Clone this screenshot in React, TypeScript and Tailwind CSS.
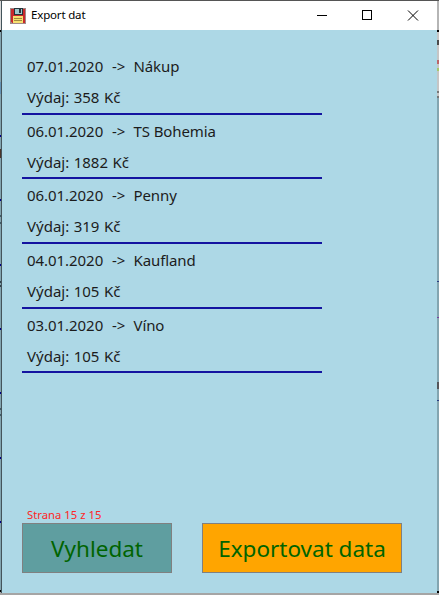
type Segment = [height: number, color: string];

const leftEdge: Segment[] = [
  [29, 'bg-[#d8d8d8]'], [2, 'bg-black'], [50, 'bg-[#83a5b0]'], [12, 'bg-[#6493b5]'],
  [41, 'bg-[#83a5b0]'], [2, 'bg-[#00008b]'], [12, 'bg-[#83a5b0]'], [9, 'bg-[#4a352a]'],
  [41, 'bg-[#83a5b0]'], [2, 'bg-[#00008b]'], [14, 'bg-[#83a5b0]'], [2, 'bg-[#405d69]'],
  [5, 'bg-[#83a5b0]'], [2, 'bg-[#405d69]'], [40, 'bg-[#83a5b0]'], [2, 'bg-[#00008b]'],
  [15, 'bg-[#83a5b0]'], [2, 'bg-[#30434c]'], [2, 'bg-[#83a5b0]'], [2, 'bg-[#30434c]'],
  [41, 'bg-[#83a5b0]'], [2, 'bg-[#00008b]'], [62, 'bg-[#83a5b0]'], [2, 'bg-[#00008b]'],
  [14, 'bg-[#83a5b0]'], [2, 'bg-[#405d69]'], [4, 'bg-[#83a5b0]'], [2, 'bg-[#405d69]'],
  [41, 'bg-[#83a5b0]'], [2, 'bg-[#00008b]'], [62, 'bg-[#83a5b0]'], [2, 'bg-[#00008b]'],
  [67, 'bg-[#83a5b0]'], [2, 'bg-black'],
];

const rightEdge: Segment[] = [
  [29, 'bg-[#b5b5b5]'], [2, 'bg-black'], [8, 'bg-[#c5c5c5]'], [5, 'bg-[#4b4b4b]'],
  [15, 'bg-[#c5c5c5]'], [4, 'bg-[#bb6569]'], [4, 'bg-[#c5c5c5]'], [3, 'bg-[#a6c86c]'],
  [20, 'bg-[#c5c5c5]'], [2, 'bg-[#777777]'], [3, 'bg-[#c5c5c5]'], [2, 'bg-[#777777]'],
  [183, 'bg-[#83a5b0]'], [1, 'bg-[#273b83]'], [35, 'bg-[#83a5b0]'], [1, 'bg-[#7840a0]'],
  [64, 'bg-[#83a5b0]'], [7, 'bg-[#55565a]'], [11, 'bg-[#83a5b0]'], [1, 'bg-[#273b83]'],
  [190, 'bg-[#83a5b0]'], [2, 'bg-black'],
];

function Edge({ segments, className }: { segments: Segment[]; className: string }) {
  return (
    <div className={`flex shrink-0 flex-col ${className}`}>
      {segments.map(([height, color], i) => (
        <div key={i} className={`shrink-0 ${color}`} style={{ height }} />
      ))}
    </div>
  );
}

const expenses = [
  { date: '07.01.2020', name: 'Nákup', amount: '358' },
  { date: '06.01.2020', name: 'TS Bohemia', amount: '1882' },
  { date: '06.01.2020', name: 'Penny', amount: '319' },
  { date: '04.01.2020', name: 'Kaufland', amount: '105' },
  { date: '03.01.2020', name: 'Víno', amount: '105' },
];

function FloppyIcon() {
  return (
    <svg width="16" height="16" viewBox="0 0 16 16" shapeRendering="crispEdges">
      <path d="M0 0h16v16H0z" fill="#a08a88" />
      <path d="M1 1h14v14H2l-1-1z" fill="#c9292b" />
      <path d="M4 0h9v7H4z" fill="#26343b" />
      <path d="M5 1h7v5H5z" fill="#9fc9cc" />
      <path d="M9 1h2v4H9z" fill="#26343b" />
      <path d="M3 8h10v7H3z" fill="#f6e070" />
      <path d="M4 10.5h8M4 12.500h8" stroke="#a08a3c" />
    </svg>
  );
}

export default function App() {
  return (
    <div className="flex h-[595px] w-[439px] flex-col overflow-hidden bg-[#a5a5a5] font-['Noto_Sans','Open_Sans',sans-serif]">
      <div className="h-px shrink-0 bg-[#555555]" />
      <div className="flex h-[592px] shrink-0">
        <Edge segments={leftEdge} className="w-px" />
        <div className="w-px bg-[#44545b]" />
        <main className="flex w-[435px] flex-col bg-[#add8e6]">
          <header className="flex h-[29px] shrink-0 items-center bg-white pl-2">
            <FloppyIcon />
            <h1 className="-mt-px ml-[5px] text-[11.5px] leading-4 tracking-[-0.17px] text-black">Export dat</h1>
            <svg className="ml-auto" width="138" height="29" viewBox="0 0 138 29" fill="none" stroke="#000" shapeRendering="crispEdges">
              <path d="M18 14.5h10M63.5 9.5h9v9h-9z" />
              <path d="m109 9.500 10 10m0-10-10 10" shapeRendering="auto" />
            </svg>
          </header>
          <ul className="ml-5 mt-5 w-[300px] text-[15px] leading-[31px] text-[#1c1c1c]">
            {expenses.map((item, i) => (
              <li key={i} className="h-[64.7px] border-b-2 border-[#1414a0] pl-[5px] pt-px">
                <div className="flex h-[31px]">
                  <span className="w-[85px] tracking-[-0.05px]">{item.date}</span>
                  <span className="w-[21.5px]">-&gt;</span>
                  <span className="tracking-[-0.1px]">{item.name}</span>
                </div>
                <div className="[word-spacing:0.6px]">Výdaj: {item.amount} Kč</div>
              </li>
            ))}
          </ul>
          <footer className="mb-5 ml-5 mt-auto">
            <p className="pl-[5px] text-[11.300px] leading-4 text-[#ff2626]">Strana 15 z 15</p>
            <div className="flex gap-[30px]">
              <button className="h-[50px] w-[150px] border border-[#808080] bg-[#5f9ea0] pt-[3px] text-[22.500px] leading-none text-[#006400]">Vyhledat</button>
              <button className="h-[50px] w-[200px] border border-[#808080] bg-[#ffa500] pt-[3px] text-[22.500px] leading-none text-[#006400]">Exportovat data</button>
            </div>
          </footer>
        </main>
        <Edge segments={rightEdge} className="w-[2px]" />
      </div>
    </div>
  );
}
